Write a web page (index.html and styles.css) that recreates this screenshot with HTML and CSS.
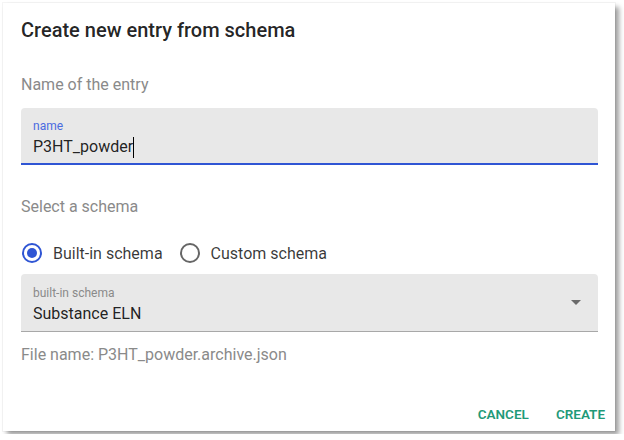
FILE: index.html
```html
<!DOCTYPE html>
<html>
<head>
<meta charset="utf-8">
<link rel="stylesheet" href="styles.css">
</head>
<body>
<div class="dialog">
  <h2 class="title">Create new entry from schema</h2>
  <div class="content">
    <p class="section">Name of the entry</p>
    <div class="field focused">
      <span class="label">name</span>
      <span class="value">P3HT_powder<span class="caret"></span></span>
    </div>
    <p class="section schema-head">Select a schema</p>
    <div class="radios">
      <label class="radio">
        <svg class="radio-icon" viewBox="0 0 24 24" width="24" height="24"><circle cx="12" cy="12" r="9" fill="none" stroke="#2f55d4" stroke-width="2"/><circle cx="12" cy="12" r="5" fill="#2f55d4"/></svg>
        <span>Built-in schema</span>
      </label>
      <label class="radio">
        <svg class="radio-icon" viewBox="0 0 24 24" width="24" height="24"><circle cx="12" cy="12" r="9" fill="none" stroke="#666" stroke-width="2"/></svg>
        <span>Custom schema</span>
      </label>
    </div>
    <div class="field select">
      <span class="label">built-in schema</span>
      <span class="value">Substance ELN</span>
      <svg class="arrow" viewBox="0 0 24 24" width="24" height="24"><path d="M7 10l5 5 5-5z" fill="rgba(0,0,0,0.54)"/></svg>
    </div>
    <p class="filename">File name: P3HT_powder.archive.json</p>
  </div>
  <div class="actions">
    <button class="btn">Cancel</button>
    <button class="btn">Create</button>
  </div>
</div>
</body>
</html>
```
FILE: styles.css
```css
* { box-sizing: border-box; }
html, body { margin: 0; padding: 0; background: #fff; }
body { font-family: Roboto, "Noto Sans", sans-serif; padding: 3px; }
.dialog {
  width: 612px;
  height: 428px;
  background: #fff;
  box-shadow: 0 0 0 1px rgba(0,0,0,0.04), 4px 4px 5px rgba(0,0,0,0.38);
  display: flex;
  flex-direction: column;
}
.title {
  margin: 0;
  padding: 13px 18px 0;
  font-size: 20px;
  line-height: 28px;
  font-weight: 500;
  color: rgba(0,0,0,0.87);
}
.content {
  padding: 0 17px 0 18px;
  flex: 1;
}
.section {
  margin: 29px 0 0;
  font-size: 16px;
  line-height: 24px;
  color: #8a8a8a;
}
.field {
  position: relative;
  margin-top: 11px;
  height: 57px;
  background: #e8e8e8;
  border-radius: 4px 4px 0 0;
  border-bottom: 2px solid #2f55d4;
  padding: 10px 12px 0;
  display: flex;
  flex-direction: column;
}
.label {
  font-size: 12px;
  line-height: 16px;
  color: #4a6be0;
}
.value {
  font-size: 16px;
  line-height: 24px;
  color: rgba(0,0,0,0.87);
  margin-top: 1px;
  display: flex;
  align-items: center;
}
.caret {
  display: inline-block;
  width: 1px;
  height: 21px;
  background: #000;
}
.schema-head { margin-top: 30px; }
.radios {
  display: flex;
  align-items: center;
  height: 42px;
  margin-top: 13px;
  margin-left: -1px;
}
.radio {
  display: flex;
  align-items: center;
  font-size: 16px;
  color: rgba(0,0,0,0.78);
  margin-right: 15px;
}
.radio-icon { margin-right: 9px; }
.field.select {
  margin-top: 0;
  height: 58px;
  border-bottom: 1px solid #a8a8a8;
  padding-top: 11px;
}
.field.select .label { color: #8a8a8a; }
.arrow {
  position: absolute;
  right: 10px;
  top: 16px;
}
.filename {
  margin: 11px 0 0;
  font-size: 16px;
  line-height: 24px;
  color: #8a8a8a;
}
.actions {
  display: flex;
  justify-content: flex-end;
  gap: 27px;
  padding: 0 10px 5px;
}
.btn {
  border: none;
  background: none;
  padding: 0;
  font-family: inherit;
  font-size: 13.5px;
  font-weight: 600;
  line-height: 24px;
  text-transform: uppercase;
  color: #1f9a78;
  letter-spacing: 0;
}
```
